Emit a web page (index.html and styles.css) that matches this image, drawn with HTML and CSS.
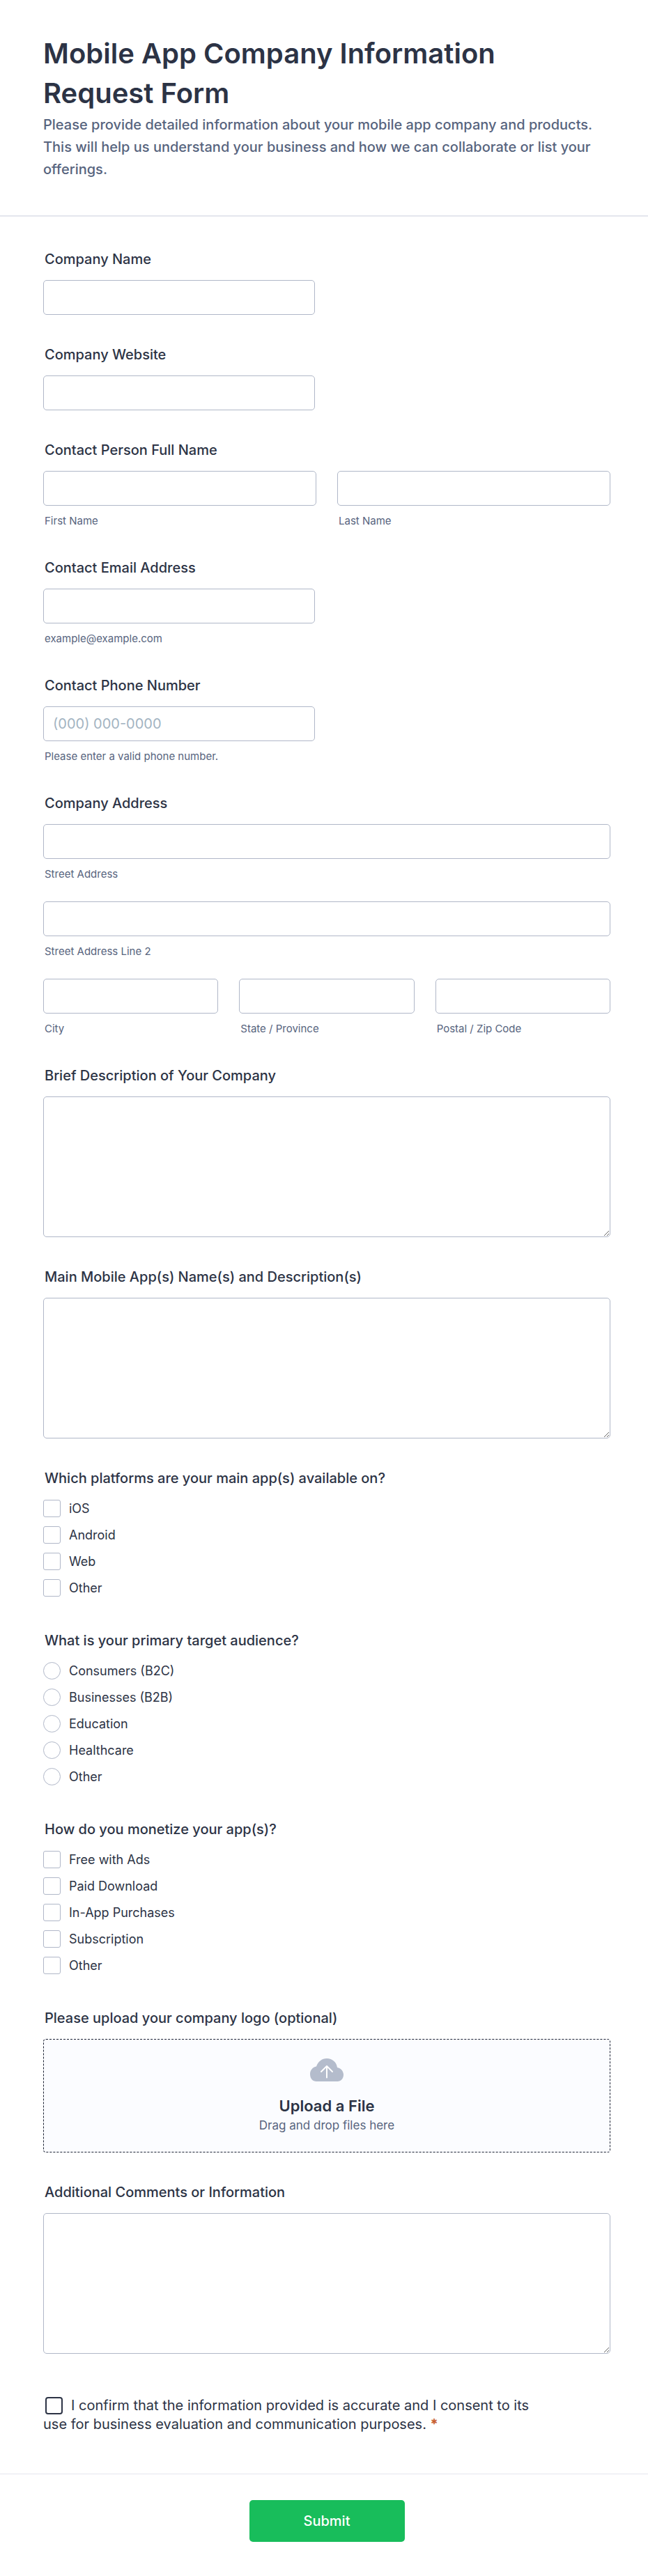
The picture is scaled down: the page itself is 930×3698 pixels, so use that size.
FILE: index.html
```html
<!DOCTYPE html>
<html lang="en">
<head>
<meta charset="utf-8">
<meta name="viewport" content="width=device-width, initial-scale=1">
<title>Mobile App Company Information Request Form</title>
<link rel="stylesheet" href="styles.css">
</head>
<body>
<form class="form">
  <header class="form-header">
    <h1 class="form-title">Mobile App Company Information Request Form</h1>
    <p class="form-intro">Please provide detailed information about your mobile app company and products. This will help us understand your business and how we can collaborate or list your offerings.</p>
  </header>

  <div class="form-body">
    <div class="field">
      <label class="label" for="company">Company Name</label>
      <input class="input short" id="company" type="text">
    </div>
    <div class="field">
      <label class="label" for="website">Company Website</label>
      <input class="input short" id="website" type="text">
    </div>
    <fieldset class="field">
      <legend class="label">Contact Person Full Name</legend>
      <div class="columns">
        <div class="part"><input class="input" id="first" type="text"><label class="hint" for="first">First Name</label></div>
        <div class="part"><input class="input" id="last" type="text"><label class="hint" for="last">Last Name</label></div>
      </div>
    </fieldset>
    <div class="field">
      <label class="label" for="email">Contact Email Address</label>
      <input class="input short" id="email" type="email">
      <label class="hint" for="email">example@example.com</label>
    </div>
    <div class="field">
      <label class="label" for="phone">Contact Phone Number</label>
      <input class="input short" id="phone" type="tel" placeholder="(000) 000-0000">
      <label class="hint" for="phone">Please enter a valid phone number.</label>
    </div>
    <fieldset class="field">
      <legend class="label">Company Address</legend>
      <div class="rows">
        <div class="part"><input class="input" id="street" type="text"><label class="hint" for="street">Street Address</label></div>
        <div class="part"><input class="input" id="street2" type="text"><label class="hint" for="street2">Street Address Line 2</label></div>
        <div class="columns">
          <div class="part"><input class="input" id="city" type="text"><label class="hint" for="city">City</label></div>
          <div class="part"><input class="input" id="state" type="text"><label class="hint" for="state">State / Province</label></div>
          <div class="part"><input class="input" id="zip" type="text"><label class="hint" for="zip">Postal / Zip Code</label></div>
        </div>
      </div>
    </fieldset>
    <div class="field">
      <label class="label" for="brief">Brief Description of Your Company</label>
      <textarea class="input area" id="brief"></textarea>
    </div>
    <div class="field">
      <label class="label" for="apps">Main Mobile App(s) Name(s) and Description(s)</label>
      <textarea class="input area" id="apps"></textarea>
    </div>
    <fieldset class="field">
      <legend class="label">Which platforms are your main app(s) available on?</legend>
      <div class="options">
        <label class="option"><input class="tick" type="checkbox" name="platform">iOS</label>
        <label class="option"><input class="tick" type="checkbox" name="platform">Android</label>
        <label class="option"><input class="tick" type="checkbox" name="platform">Web</label>
        <label class="option"><input class="tick" type="checkbox" name="platform">Other</label>
      </div>
    </fieldset>
    <fieldset class="field">
      <legend class="label">What is your primary target audience?</legend>
      <div class="options">
        <label class="option"><input class="tick" type="radio" name="audience">Consumers (B2C)</label>
        <label class="option"><input class="tick" type="radio" name="audience">Businesses (B2B)</label>
        <label class="option"><input class="tick" type="radio" name="audience">Education</label>
        <label class="option"><input class="tick" type="radio" name="audience">Healthcare</label>
        <label class="option"><input class="tick" type="radio" name="audience">Other</label>
      </div>
    </fieldset>
    <fieldset class="field">
      <legend class="label">How do you monetize your app(s)?</legend>
      <div class="options">
        <label class="option"><input class="tick" type="checkbox" name="revenue">Free with Ads</label>
        <label class="option"><input class="tick" type="checkbox" name="revenue">Paid Download</label>
        <label class="option"><input class="tick" type="checkbox" name="revenue">In-App Purchases</label>
        <label class="option"><input class="tick" type="checkbox" name="revenue">Subscription</label>
        <label class="option"><input class="tick" type="checkbox" name="revenue">Other</label>
      </div>
    </fieldset>
    <div class="field">
      <label class="label" for="logo">Please upload your company logo (optional)</label>
      <label class="dropzone">
        <input class="file" id="logo" type="file">
        <svg class="cloud" viewBox="0 0 48 33" aria-hidden="true">
          <path d="M9 33C4 33 0 29 0 22.500C0 16.500 4 12.500 9 11.500C11.500 4.500 17 0 24 0C32 0 38 5.500 39 13C44 14 48 18 48 23.500C48 29 44 33 39.500 33Z" fill="#b4bccc"/>
          <path d="M24 27.500V11.500M16 19L24 11L32 19" fill="none" stroke="#fff" stroke-width="2" stroke-linecap="round" stroke-linejoin="round"/>
        </svg>
        <span class="upload-title">Upload a File</span>
        <span class="upload-text">Drag and drop files here</span>
      </label>
    </div>
    <div class="field">
      <label class="label" for="comments">Additional Comments or Information</label>
      <textarea class="input area" id="comments"></textarea>
    </div>
    <div class="consent">
      <input class="tick consent-tick" id="consent" type="checkbox" required><label for="consent">I confirm that the information provided is accurate and I consent to its use for business evaluation and communication purposes.</label>
      <span class="required">*</span>
    </div>
  </div>

  <footer class="form-footer">
    <button class="submit" type="submit">Submit</button>
  </footer>
</form>
</body>
</html>
```
FILE: styles.css
```css
* {
  box-sizing: border-box;
}

body {
  margin: 0;
  background: #fff;
  color: #2c3345;
  font-family: Inter, "Liberation Sans", sans-serif;
}

.form-header {
  padding: 48px 54px 50px 62px;
  border-bottom: 2px solid #e4e6ee;
}

.form-title {
  margin: 0 0 1px;
  font-size: 40px;
  font-weight: 600;
  line-height: 57px;
}

.form-intro {
  margin: 0;
  color: #57647e;
  font-size: 20px;
  font-weight: 500;
  line-height: 32px;
}

.form-body {
  padding: 49px 54px 57px 62px;
}

.field {
  min-width: 0;
  margin: 0 0 45px;
  padding: 0;
  border: 0;
}

.label {
  display: block;
  margin-bottom: 17px;
  padding: 0 0 0 2px;
  font-size: 20px;
  font-weight: 500;
  line-height: 25px;
}

.input {
  display: block;
  width: 100%;
  height: 50px;
  margin: 0;
  padding: 0 13px;
  border: 1px solid #b0b7c8;
  border-radius: 5px;
  background: #fff;
  color: #2c3345;
  font-family: inherit;
  font-size: 20px;
}

.input::placeholder {
  color: #a3b4c2;
  opacity: 1;
}

.short {
  max-width: 390px;
}

.area {
  height: 202px;
  padding: 5px 13px;
  resize: both;
}

.hint {
  display: block;
  margin-top: 12px;
  padding-left: 2px;
  color: #57647e;
  font-size: 15px;
  line-height: 20px;
}

.columns {
  display: flex;
  gap: 30px;
}

.part {
  flex: 1;
  min-width: 0;
}

.rows {
  display: flex;
  flex-direction: column;
  gap: 29px;
}

.options {
  display: flex;
  flex-direction: column;
  gap: 13px;
  padding: 1px 0 6px;
}

.option {
  display: flex;
  align-items: center;
  gap: 12px;
  font-size: 18px;
  line-height: 25px;
}

.tick {
  flex: none;
  appearance: none;
  width: 25px;
  height: 25px;
  margin: 0;
  border: 1px solid #b0b7c8;
  border-radius: 3px;
  background: #fff;
}

.tick[type="radio"] {
  border-radius: 50%;
}

.tick:checked {
  background: #18bd5b;
}

.dropzone {
  display: flex;
  flex-direction: column;
  align-items: center;
  padding: 27px 20px 25px;
  border: 1px dashed #1c2233;
  border-radius: 4px;
  background: #fbfcff;
  cursor: pointer;
}

.file {
  position: absolute;
  width: 1px;
  height: 1px;
  opacity: 0;
}

.cloud {
  width: 48px;
  height: 33px;
}

.upload-title {
  margin-top: 20px;
  font-size: 22px;
  font-weight: 600;
  line-height: 30px;
}

.upload-text {
  color: #57647e;
  font-size: 17px;
  line-height: 26px;
}

.consent {
  max-width: 700px;
  padding-top: 16px;
  font-size: 20px;
  line-height: 27px;
}

.consent-tick {
  margin: 0 12px 0 3px;
  border: 2px solid #2c3345;
  border-radius: 4px;
  vertical-align: -6px;
}

.required {
  color: #c75f30;
  font-weight: 700;
}

.form-footer {
  display: flex;
  justify-content: center;
  padding: 37px 54px 50px 62px;
  border-top: 1px solid #e4e6ee;
}

.submit {
  min-width: 223px;
  height: 60px;
  border: 0;
  border-radius: 5px;
  background: #18bd5b;
  color: #fff;
  font-family: inherit;
  font-size: 20px;
  font-weight: 500;
}
```
